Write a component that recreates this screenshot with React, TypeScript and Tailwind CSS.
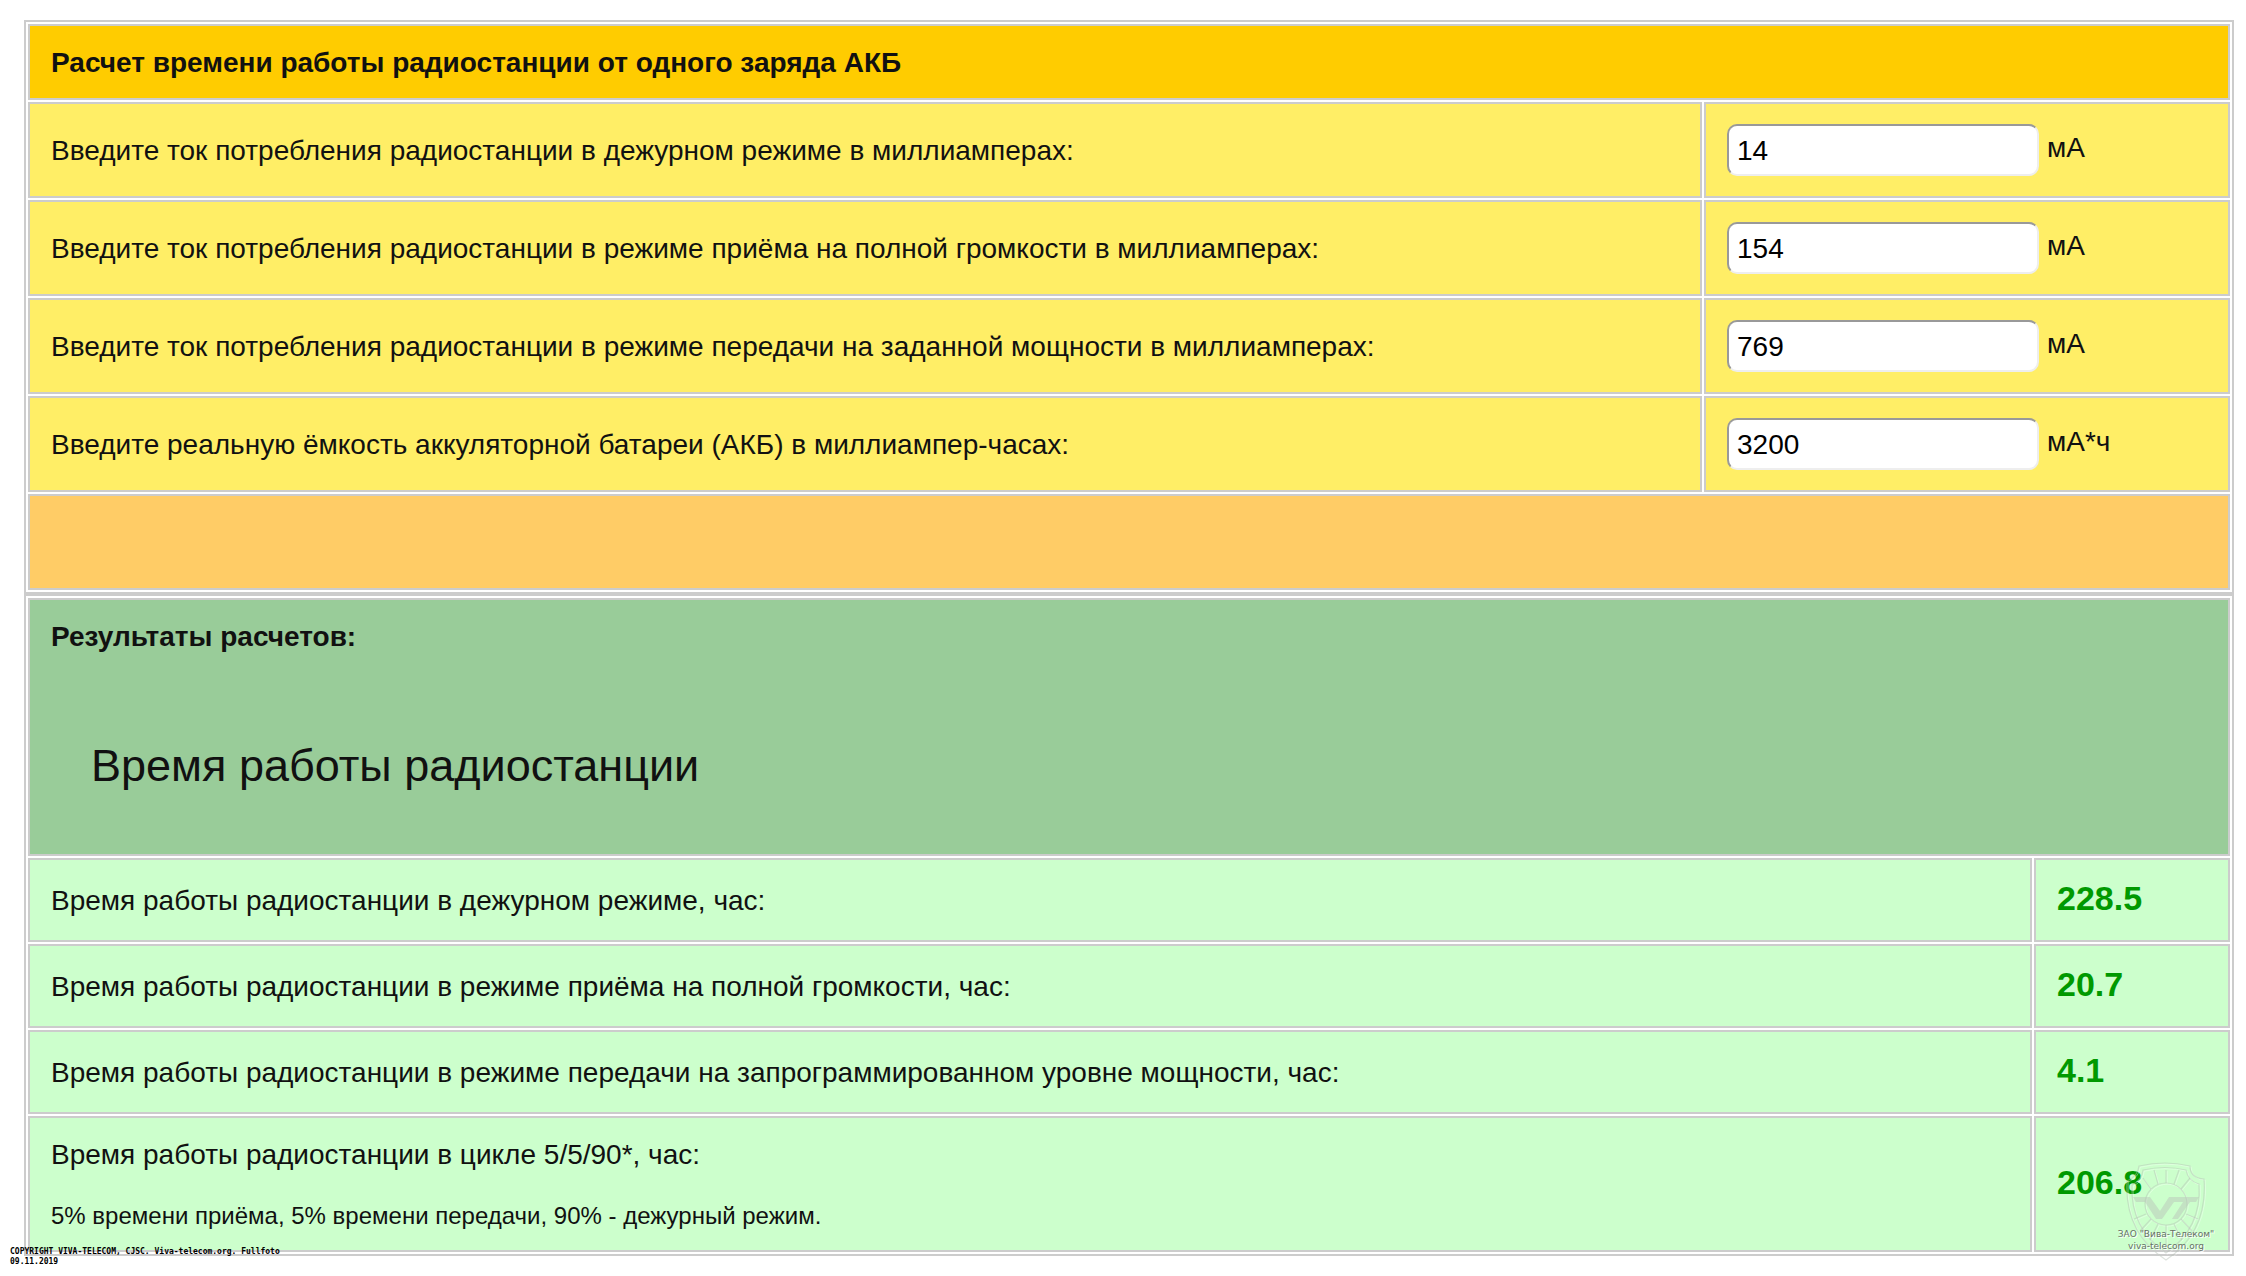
import { useState } from "react";

type FieldKey = "standby" | "receive" | "transmit" | "capacity";

interface Field {
  key: FieldKey;
  label: string;
  unit: string;
}

interface ResultRowProps {
  label: string;
  value: number;
  note?: string;
}

const fields: Field[] = [
  {
    key: "standby",
    label: "Введите ток потребления радиостанции в дежурном режиме в миллиамперах:",
    unit: "мА",
  },
  {
    key: "receive",
    label:
      "Введите ток потребления радиостанции в режиме приёма на полной громкости в миллиамперах:",
    unit: "мА",
  },
  {
    key: "transmit",
    label:
      "Введите ток потребления радиостанции в режиме передачи на заданной мощности в миллиамперах:",
    unit: "мА",
  },
  {
    key: "capacity",
    label: "Введите реальную ёмкость аккуляторной батареи (АКБ) в миллиампер-часах:",
    unit: "мА*ч",
  },
];

const floor1 = (n: number) => (Number.isFinite(n) ? Math.floor(n * 10) / 10 : 0);

const ResultRow = ({ label, value, note }: ResultRowProps) => (
  <tr>
    <th
      scope="row"
      className="border-2 border-[#cccccc] bg-[#ccffcc] pt-[21px] pr-5 pb-[19px] pl-[21px] text-left font-normal"
    >
      <p>{label}</p>
      {note && <p className="mt-[30px] text-2xl leading-[30px]">{note}</p>}
    </th>
    <td className="w-[196px] border-2 border-[#cccccc] bg-[#ccffcc] py-5 pr-5 pl-[21px] text-[34px] font-bold text-[#009900]">
      <output className="block pb-1 leading-9">{value.toFixed(1)}</output>
    </td>
  </tr>
);

const ShieldLines = () => (
  <>
    <path d="M15 4Q41-2 66 4Q66 16 80 17Q84 70 42 98Q0 70 3 19Q14 14 15 4Z" />
    <path d="M19 8Q41 3 62 8Q64 19 75 22Q78 66 42 91Q6 66 8 23Q18 18 19 8Z" />
    <circle cx="42" cy="42" r="21" />
    <path d="M42 21V8M34 22L30 8M50 22L55 8M27 27L19 16M57 27L66 16M22 52L10 57M62 52L74 57M27 57L16 69M57 57L68 69M34 62L26 78M50 62L58 78M42 63V86" />
  </>
);

const Shield = () => (
  <svg
    viewBox="0 0 84 100"
    className="absolute top-0 left-1/2 h-[100px] w-[84px] -translate-x-1/2"
    fill="none"
    aria-hidden="true"
  >
    <g
      stroke="#ffffff"
      strokeOpacity="0.35"
      strokeWidth="1"
      transform="translate(1.2 1.2)"
    >
      <ShieldLines />
    </g>
    <g stroke="#b4beb4" strokeOpacity="0.45" strokeWidth="1.2">
      <ShieldLines />
    </g>
    <path
      d="M9 35H26L36 49L45 35H75L72 40H66L54 57H48L59 40H50L38 57H32L21 40H12Z"
      fill="#b9c6b9"
      fillOpacity="0.5"
    />
  </svg>
);

export default function App() {
  const [values, setValues] = useState<Record<FieldKey, string>>({
    standby: "14",
    receive: "154",
    transmit: "769",
    capacity: "3200",
  });

  const capacity = Number(values.capacity);
  const standby = floor1(capacity / Number(values.standby));
  const receive = floor1(capacity / Number(values.receive));
  const transmit = floor1(capacity / Number(values.transmit));
  const cycle = floor1(standby * 0.9 + receive * 0.05 + transmit * 0.05);

  return (
    <div className="relative bg-white pt-5 pr-3 pb-5 pl-6 font-['Liberation_Sans',Arial,sans-serif] text-[28px] leading-8 text-[#111111]">
      <table className="w-full border-separate border-spacing-[2px] border-2 border-[#cccccc]">
        <thead>
          <tr>
            <th
              colSpan={2}
              className="border-2 border-[#cccccc] bg-[#ffcc00] pt-[21px] pr-5 pb-[19px] pl-[21px] text-left font-bold"
            >
              Расчет времени работы радиостанции от одного заряда АКБ
            </th>
          </tr>
        </thead>
        <tbody>
          {fields.map((field) => (
            <tr key={field.key}>
              <td className="border-2 border-[#cccccc] bg-[#ffee66] pt-[21px] pr-5 pb-[19px] pl-[21px]">
                <label htmlFor={field.key}>{field.label}</label>
              </td>
              <td className="w-[526px] border-2 border-[#cccccc] bg-[#ffee66] py-5 pr-5 pl-[21px]">
                <div className="flex items-center gap-2">
                  <input
                    id={field.key}
                    type="text"
                    inputMode="numeric"
                    value={values[field.key]}
                    onChange={(e) =>
                      setValues({ ...values, [field.key]: e.target.value })
                    }
                    className="h-[52px] w-[312px] rounded-[10px] border-2 border-t-[#999999] border-r-[#eeeeee] border-b-[#eeeeee] border-l-[#999999] bg-white px-2 pt-0.5 text-black"
                  />
                  <span className="pb-1">{field.unit}</span>
                </div>
              </td>
            </tr>
          ))}
          <tr>
            <td
              colSpan={2}
              className="h-24 border-2 border-[#cccccc] bg-[#ffcc66]"
            ></td>
          </tr>
        </tbody>
      </table>

      <table className="w-full border-separate border-spacing-[2px] border-2 border-[#cccccc]">
        <thead>
          <tr>
            <th
              colSpan={2}
              className="border-2 border-[#cccccc] bg-[#99cc99] pt-[21px] pr-5 pb-[19px] pl-[21px] text-left"
            >
              <p className="font-bold">Результаты расчетов:</p>
              <h1 className="px-10 pt-[88px] pb-11 text-[45px] leading-[50px] font-normal">
                Время работы радиостанции
              </h1>
            </th>
          </tr>
        </thead>
        <tbody>
          <ResultRow
            label="Время работы радиостанции в дежурном режиме, час:"
            value={standby}
          />
          <ResultRow
            label="Время работы радиостанции в режиме приёма на полной громкости, час:"
            value={receive}
          />
          <ResultRow
            label="Время работы радиостанции в режиме передачи на запрограммированном уровне мощности, час:"
            value={transmit}
          />
          <ResultRow
            label="Время работы радиостанции в цикле 5/5/90*, час:"
            value={cycle}
            note="5% времени приёма, 5% времени передачи, 90% - дежурный режим."
          />
        </tbody>
      </table>

      <p className="absolute bottom-[9px] left-[10px] font-['DejaVu_Sans_Mono',monospace] text-[8px] leading-[10px] font-bold text-black">
        COPYRIGHT VIVA-TELECOM, CJSC. Viva-telecom.org. Fullfoto
        <br />
        09.11.2019
      </p>

      <div className="absolute right-7 bottom-[14px] h-[100px] w-[104px]">
        <Shield />
        <p className="relative pt-[66px] text-center font-['DejaVu_Sans',sans-serif] text-[9px] leading-3 whitespace-nowrap text-[#667066] [text-shadow:1px_1px_0_white]">
          ЗАО "Вива-Телеком"
          <br />
          viva-telecom.org
        </p>
      </div>
    </div>
  );
}
